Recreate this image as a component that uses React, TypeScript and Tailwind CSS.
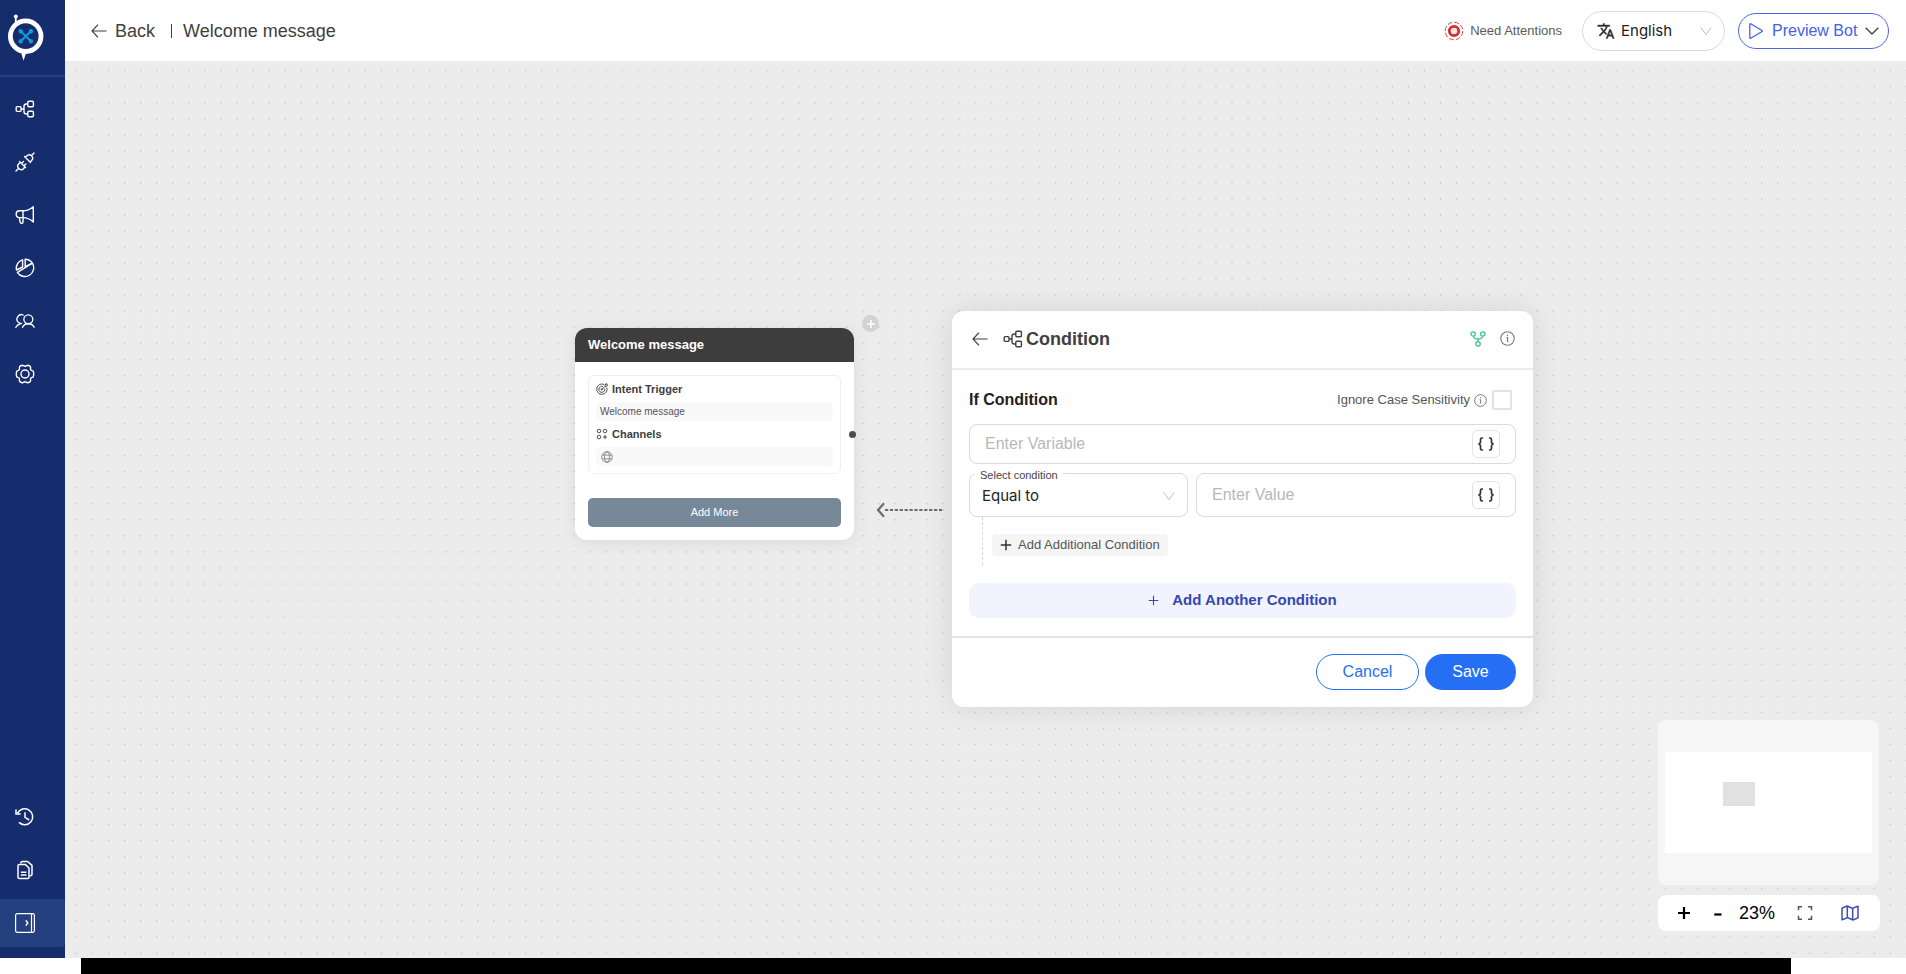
import React, { useState } from "react";

type IconProps = { className?: string };

const FlowIcon = ({ className = "size-5" }: IconProps) => (
  <svg viewBox="0 0 20 20" fill="none" stroke="currentColor" strokeWidth="1.4" className={className} aria-hidden="true">
    <rect x="1.2" y="7.6" width="4.8" height="4.8" rx="1" />
    <rect x="12.8" y="2.2" width="5.6" height="5.6" rx="1" />
    <rect x="12.8" y="12.2" width="5.6" height="5.6" rx="1" />
    <path d="M6 10h3M12.8 5h-1.6c-1.3 0-2.2.9-2.2 2.2v5.6c0 1.3.9 2.2 2.2 2.2h1.6" />
  </svg>
);

const PlugIcon = ({ className = "size-5" }: IconProps) => (
  <svg viewBox="0 0 20 20" fill="none" stroke="currentColor" strokeWidth="1.4" strokeLinecap="round" strokeLinejoin="round" className={className} aria-hidden="true">
    <path d="M1 19l2.200-2.200M4.500 9.500l6 6M5.300 10.300l-1.300 1.300c-1.500 1.500-1.500 3.700-.2 5 1.300 1.300 3.500 1.300 5-.2l1-1.600M6.800 11.200l1.700-1.700M9.200 13.600l1.700-1.700" />
    <path d="M19 1l-2.200 2.200M9.500 4.500l6 6M10.300 5.300l1.300-1.300c1.500-1.500 3.700-1.500 5-.2 1.300 1.300 1.300 3.500-.2 5l-1.600 1" />
  </svg>
);

const MegaphoneIcon = ({ className = "size-5" }: IconProps) => (
  <svg viewBox="0 0 20 20" fill="none" stroke="currentColor" strokeWidth="1.4" strokeLinejoin="round" className={className} aria-hidden="true">
    <path d="M8 5.800H4.600a3.200 3.200 0 0 0 0 6.800H8c4 0 7.600 1.900 10.300 4.400V1.700C15.600 4 12 5.800 8 5.800z" />
    <path d="M8 5.800v11.200c0 1.900-2.600 1.900-2.900 0l-.8-4.400" />
  </svg>
);

const PieIcon = ({ className = "size-5" }: IconProps) => (
  <svg viewBox="0 0 20 20" fill="none" stroke="currentColor" strokeWidth="1.4" strokeLinejoin="round" className={className} aria-hidden="true">
    <path d="M10.200 1.300a8.700 8.700 0 0 1 7.200 3.900L10.200 8.700z" />
    <path d="M7.600 1.800v7.200l-6.100 3A8.700 8.700 0 0 1 7.600 1.800z" />
    <path d="M2.400 14.300L17.400 5.200a8.700 8.700 0 1 1-15 9.100z" />
  </svg>
);

const UsersIcon = ({ className = "size-5" }: IconProps) => (
  <svg viewBox="0 0 21 20" fill="none" stroke="currentColor" strokeWidth="1.4" strokeLinecap="round" className={className} aria-hidden="true">
    <circle cx="14" cy="8.200" r="4.700" />
    <path d="M7.900 16.600c1.100-2.400 3.300-3.700 6.100-3.700s5 1.300 6.100 3.700" />
    <path d="M8.600 3.700a4.700 4.700 0 0 0-5.300 7.500c.9.900 2.200 1.500 3.500 1.400M.9 16.600c.9-1.900 2.600-3.200 4.700-3.700" />
  </svg>
);

const GearIcon = ({ className = "size-5" }: IconProps) => (
  <svg viewBox="0 0 20 20" fill="none" stroke="currentColor" strokeWidth="1.4" strokeLinejoin="round" className={className} aria-hidden="true">
    <circle cx="10" cy="10" r="4" />
    <path d="M7.200 1.200c.9 0 1.700 1.100 2.800 1.100s1.900-1.100 2.800-1.100c1 .2 2.400 1 2.700 1.700.3.900-.3 2 .3 2.900.6.900 1.900.8 2.500 1.500.5.700.5 4.700 0 5.400-.6.700-1.900.6-2.500 1.500-.6.900 0 2-.3 2.900-.3.700-1.700 1.500-2.700 1.700-.9 0-1.700-1.100-2.800-1.100s-1.900 1.100-2.800 1.100c-1-.2-2.400-1-2.700-1.700-.3-.9.300-2-.3-2.900-.6-.9-1.900-.8-2.500-1.500-.5-.7-.5-4.700 0-5.400.6-.7 1.900-.6 2.500-1.500.6-.9 0-2 .3-2.900.3-.7 1.700-1.500 2.700-1.700z" />
  </svg>
);

const HistoryIcon = ({ className = "size-5" }: IconProps) => (
  <svg viewBox="0 0 20 20" fill="none" stroke="currentColor" strokeWidth="1.500" className={className} aria-hidden="true">
    <path d="M2.500 6.300A8 8 0 1 1 4 15.400" />
    <path d="M1 2.500v4.400h4.600" />
    <path d="M10 5.200v5.200l4.200 2.600" />
  </svg>
);

const DocsIcon = ({ className = "size-5" }: IconProps) => (
  <svg viewBox="0 0 20 20" fill="none" stroke="currentColor" strokeWidth="1.500" strokeLinejoin="round" className={className} aria-hidden="true">
    <path d="M3 5.800c0-.8.6-1.400 1.400-1.400h5.800L14 8v9.200c0 .8-.6 1.400-1.400 1.400H4.400c-.8 0-1.400-.6-1.400-1.400z" />
    <path d="M5.900 3.600V3c0-.9.6-1.500 1.500-1.500h5.200L17 5.400v8.800c0 .9-.6 1.500-1.500 1.500H14.900" />
    <path d="M5.800 12.300h5.600M5.800 15h5.600" />
  </svg>
);

const PanelIcon = ({ className = "size-5" }: IconProps) => (
  <svg viewBox="0 0 20 20" fill="none" stroke="currentColor" strokeWidth="1.200" strokeLinejoin="round" className={className} aria-hidden="true">
    <rect x=".6" y=".6" width="18.800" height="18.800" rx="1.800" />
    <path d="M16.500.6v18.800" />
    <path d="M10.800 7.400l2 2.600-2 2.600" strokeWidth="1.500" />
  </svg>
);

const Logo = () => (
  <svg viewBox="0 0 40 50" className="h-[50px] w-10" aria-label="Bot logo" role="img">
    <path d="M9.800 5v7" stroke="#fff" strokeWidth="1.800" />
    <circle cx="9.800" cy="4.600" r="2" fill="#fff" />
    <circle cx="19.700" cy="24.200" r="15.300" fill="none" stroke="#fff" strokeWidth="4.800" />
    <path d="M14.800 39.500h5.800l-3.100 9.300z" fill="#fff" />
    <g stroke="#0d9ddb" strokeWidth="2" fill="#0d9ddb">
      <path d="M14.800 19.300l10 10M24.800 19.300l-10 10" />
      <circle cx="14.700" cy="19.200" r="1.200" />
      <circle cx="24.900" cy="19.200" r="1.200" />
      <circle cx="14.700" cy="29.300" r="1.200" />
      <circle cx="24.900" cy="29.300" r="1.200" />
    </g>
  </svg>
);

const BackArrow = ({ className = "h-4 w-4" }: IconProps) => (
  <svg viewBox="0 0 16 16" fill="none" stroke="currentColor" strokeWidth="1.200" className={className} aria-hidden="true">
    <path d="M15.600 8H1M7 1.600L1 8l6 6.400" />
  </svg>
);

const ChevronDown = ({ className = "h-3 w-3" }: IconProps) => (
  <svg viewBox="0 0 12 10" fill="none" stroke="currentColor" className={className} aria-hidden="true">
    <path d="M.8 1.500L6 8.500l5.200-7" />
  </svg>
);

const AlertIcon = () => (
  <svg viewBox="0 0 20 20" fill="none" className="size-5" aria-hidden="true">
    <circle cx="10" cy="10" r="8.800" stroke="#e04848" strokeWidth="1" strokeDasharray="4.900 2" />
    <circle cx="10" cy="10" r="4.700" fill="#fbe6e6" stroke="#d32f2f" strokeWidth="2.800" />
  </svg>
);

const TranslateIcon = () => (
  <svg viewBox="0 0 24 24" fill="currentColor" stroke="currentColor" strokeWidth=".5" className="size-[18px]" aria-hidden="true">
    <path d="M12.870 15.070l-2.540-2.510.03-.03A17.520 17.520 0 0 0 14.070 6H17V4h-7V2H8v2H1v1.990h11.170C11.500 7.920 10.440 9.750 9 11.350 8.070 10.320 7.300 9.190 6.690 8h-2c.73 1.630 1.730 3.170 2.980 4.560l-5.090 5.020L4 19l5-5 3.110 3.110.76-2.040zM18.500 10h-2L12 22h2l1.120-3h4.750L21 22h2l-4.500-12zm-2.620 7l1.620-4.330L19.120 17h-3.240z" />
  </svg>
);

const InfoIcon = ({ className = "size-4" }: IconProps) => (
  <svg viewBox="0 0 16 16" fill="none" stroke="currentColor" strokeWidth="1.200" className={className} aria-hidden="true">
    <circle cx="8" cy="8" r="7.200" />
    <path d="M6.900 6.900H8.100v4.900" />
    <circle cx="8" cy="4.500" r=".8" fill="currentColor" stroke="none" />
  </svg>
);

const BranchIcon = () => (
  <svg viewBox="0 0 16 16" fill="none" stroke="currentColor" strokeWidth="1.200" className="size-4" aria-hidden="true">
    <circle cx="3.200" cy="3" r="2.200" />
    <circle cx="12.800" cy="3" r="2.200" />
    <circle cx="8" cy="12.900" r="2.200" />
    <path d="M3.600 5.300c.2 1.600 1.100 2.500 2.600 2.500h3.600c1.500 0 2.400-.9 2.600-2.500M8 7.800v2.900" />
  </svg>
);

const TargetIcon = () => (
  <svg viewBox="0 0 12 12" fill="none" stroke="currentColor" strokeWidth=".9" className="size-3" aria-hidden="true">
    <path d="M10.800 4.400A5.200 5.200 0 1 1 8.200 1.500" />
    <path d="M8.700 5.400A3 3 0 1 1 6.800 3.500" />
    <path d="M6 6.300l3-3V1.800L10.600.5v1.400h1.200L10.400 3.400H9" />
    <circle cx="5.900" cy="6.300" r=".8" />
  </svg>
);

const ChannelsIcon = () => (
  <svg viewBox="0 0 12 12" fill="none" stroke="currentColor" strokeWidth=".9" className="size-3" aria-hidden="true">
    <circle cx="3" cy="3" r="1.800" />
    <circle cx="9" cy="3" r="1.800" />
    <circle cx="3" cy="9" r="1.800" />
    <path d="M9 7v4M7 9h4" />
  </svg>
);

const GlobeIcon = () => (
  <svg viewBox="0 0 12 12" fill="none" stroke="currentColor" strokeWidth=".8" className="size-3" aria-hidden="true">
    <circle cx="6" cy="6" r="5.300" />
    <ellipse cx="6" cy="6" rx="2.500" ry="5.300" />
    <path d="M1.300 4.100h9.400M1.300 7.900h9.400" />
  </svg>
);

const PlusIcon = ({ className = "size-3" }: IconProps) => (
  <svg viewBox="0 0 12 12" fill="none" stroke="currentColor" strokeWidth="1.200" className={className} aria-hidden="true">
    <path d="M6 .8v10.400M.8 6h10.400" />
  </svg>
);

const PlayIcon = () => (
  <svg viewBox="0 0 16 18" fill="none" stroke="currentColor" strokeWidth="1.300" strokeLinejoin="round" className="h-[18px] w-4" aria-hidden="true">
    <path d="M1.800 2.300v13.400c0 .5.400.8.900.5l11.400-6.700c.4-.2.400-.8 0-1L2.700 1.800c-.5-.3-.9 0-.9.500z" />
  </svg>
);

const ExpandIcon = () => (
  <svg viewBox="0 0 16 16" fill="none" stroke="currentColor" strokeWidth="1.500" className="size-4" aria-hidden="true">
    <path d="M1.500 5.200V1.700H5M11 1.700h3.500v3.500M14.500 10.800v3.500H11M5 14.300H1.500v-3.500" />
  </svg>
);

const MapIcon = () => (
  <svg viewBox="0 0 18 16" fill="none" stroke="currentColor" strokeWidth="1.500" strokeLinejoin="round" className="h-4 w-[18px]" aria-hidden="true">
    <path d="M1 3.200l4.600-2.100 1.700.4 3.800 1.900 5.900-2.100v11.500l-4.600 2.100-1.700-.4-3.800-1.900L1 14.700zM6.300 1.100v11.500M11.700 3.400v11.500" />
  </svg>
);

const mainNav = [
  { label: "Flows", icon: FlowIcon },
  { label: "Integrations", icon: PlugIcon },
  { label: "Campaigns", icon: MegaphoneIcon },
  { label: "Analytics", icon: PieIcon },
  { label: "Users", icon: UsersIcon },
  { label: "Settings", icon: GearIcon },
];

const Sidebar = () => (
  <aside className="flex w-[65px] shrink-0 flex-col bg-[#162d6d] text-white">
    <div className="border-b-2 border-[#24407f] pt-3 pb-[13px] pl-[6px]">
      <Logo />
    </div>
    <nav className="flex flex-col gap-[5px] pt-2" aria-label="Main">
      {mainNav.map(({ label, icon: Icon }) => (
        <button key={label} type="button" aria-label={label} className="flex h-12 items-center pl-[15px]">
          <Icon />
        </button>
      ))}
    </nav>
    <nav className="mt-auto flex flex-col gap-[5px] pb-[11px]" aria-label="Secondary">
      <button type="button" aria-label="History" className="flex h-12 items-center pl-[15px]">
        <HistoryIcon />
      </button>
      <button type="button" aria-label="Documents" className="flex h-12 items-center pl-[15px]">
        <DocsIcon />
      </button>
      <button type="button" aria-label="Expand sidebar" className="flex h-12 items-center rounded-r-sm bg-[#24407f] pl-[15px]">
        <PanelIcon />
      </button>
    </nav>
  </aside>
);

const Header = () => (
  <header className="flex h-[61px] shrink-0 items-center bg-white pr-[17px] pl-[26px] text-[#404040]">
    <button type="button" className="flex items-center gap-2 text-lg">
      <BackArrow />
      Back
    </button>
    <span className="ml-4 h-[14px] w-px bg-[#404040]" aria-hidden="true" />
    <h1 className="ml-[11px] text-lg">Welcome message</h1>
    <div className="ml-auto flex items-center">
      <div className="flex items-center gap-[6px] text-[13px] text-[#5a5a5a]">
        <AlertIcon />
        Need Attentions
      </div>
      <div className="relative ml-5 flex h-10 w-[143px] items-center rounded-full border border-[#d9d9d9]">
        <span className="pointer-events-none absolute left-[14px] text-[#303030]">
          <TranslateIcon />
        </span>
        <select aria-label="Language" className="h-full w-full appearance-none rounded-full bg-transparent pt-[2px] pl-[38px] font-[Inter,sans-serif] text-[15px] text-[#222]">
          <option>English</option>
        </select>
        <ChevronDown className="pointer-events-none absolute right-3 h-[10px] w-3 text-[#bfbfbf]" />
      </div>
      <button type="button" className="ml-[13px] flex h-9 w-[151px] items-center rounded-full border border-[#4b69e6] pl-[9px] text-base text-[#4361ee]">
        <PlayIcon />
        <span className="ml-2">Preview Bot</span>
        <svg viewBox="0 0 14 8" fill="none" stroke="#444" strokeWidth="1.400" className="ml-2 h-2 w-[14px]" aria-hidden="true">
          <path d="M.7.8L7 7l6.300-6.200" />
        </svg>
      </button>
    </div>
  </header>
);

const DotGrid = () => (
  <svg className="absolute inset-0 h-full w-full" aria-hidden="true">
    <defs>
      <pattern id="dots" x="10.800" y="8.800" width="16.050" height="16.050" patternUnits="userSpaceOnUse">
        <circle cx=".7" cy=".7" r=".65" fill="#b0b0b0" />
      </pattern>
    </defs>
    <rect width="100%" height="100%" fill="url(#dots)" />
  </svg>
);

const MessageNode = () => (
  <section className="absolute top-[267px] left-[510px] w-[279px] rounded-xl bg-white shadow-[0_2px_16px_rgba(0,0,0,0.08)]">
    <h2 className="flex h-[34px] items-center rounded-t-xl bg-[#3d3d3d] pl-[13px] text-[13px] font-bold text-white">Welcome message</h2>
    <div className="p-[13px]">
      <div className="rounded-md border border-[#efefef] px-[7px] pt-[2px] pb-[7px]">
        <h3 className="flex h-[22px] items-center gap-1 text-[11px] font-bold text-[#3d3d3d]">
          <TargetIcon />
          Intent Trigger
        </h3>
        <p className="mt-[2px] flex h-[19px] items-center rounded-sm bg-[#f9f9f9] pl-1 text-[10px] text-[#555]">Welcome message</p>
        <h3 className="mt-[2px] flex h-[22px] items-center gap-1 text-[11px] font-bold text-[#3d3d3d]">
          <ChannelsIcon />
          Channels
        </h3>
        <div className="mt-[2px] flex h-[19px] items-center rounded-sm bg-[#f9f9f9] pl-[5px] text-[#777]">
          <GlobeIcon />
        </div>
      </div>
      <button type="button" className="mt-6 h-[29px] w-full rounded-[5px] bg-[#778899] text-[11px] text-white">Add More</button>
    </div>
    <span className="absolute top-[103px] right-[-2px] size-[7px] rounded-full bg-[#4d4d4d]" />
    <button type="button" aria-label="Add node" className="absolute top-[-13px] right-[-25px] flex size-[17px] items-center justify-center rounded-full bg-[#d3d3d3] text-white">
      <svg viewBox="0 0 10 10" stroke="currentColor" strokeWidth="1.500" className="size-[10px]" aria-hidden="true">
        <path d="M5 1v8M1 5h8" />
      </svg>
    </button>
  </section>
);

const BracesButton = ({ label }: { label: string }) => (
  <button type="button" aria-label={label} className="flex size-7 shrink-0 items-center justify-center rounded-[5px] border border-[#e3e3e3] text-[#333]">
    <svg viewBox="0 0 18 14" fill="none" stroke="currentColor" strokeWidth="1.700" className="h-[14px] w-[18px]" aria-hidden="true">
      <path d="M6 1H5C4 1 3.500 1.500 3.500 2.500v2.300C3.500 6 2.700 7 1.300 7c1.400 0 2.200 1 2.200 2.200v2.300c0 1 .5 1.500 1.500 1.500h1M12 1h1c1 0 1.500.5 1.500 1.500v2.300c0 1.200.8 2.200 2.200 2.200-1.400 0-2.200 1-2.200 2.200v2.300c0 1-.5 1.500-1.500 1.500h-1" />
    </svg>
  </button>
);

const ConditionPanel = () => {
  const [ignoreCase, setIgnoreCase] = useState(false);
  return (
    <section className="absolute top-[250px] left-[887px] w-[581px] rounded-xl bg-white shadow-[0_0_30px_rgba(0,0,0,0.1)]">
      <header className="flex h-[59px] items-center border-b-2 border-[#ececec] pr-[18px] pb-[2px] pl-5 text-[#404040]">
        <button type="button" aria-label="Back">
          <BackArrow className="size-4" />
        </button>
        <FlowIcon className="ml-[15px] size-5" />
        <h2 className="ml-[3px] text-lg font-bold">Condition</h2>
        <button type="button" aria-label="Branches" className="ml-auto text-[#2fc47c]">
          <BranchIcon />
        </button>
        <button type="button" aria-label="Condition help" className="ml-[14px] text-[#777]">
          <InfoIcon className="size-[15px]" />
        </button>
      </header>

      <div className="px-[17px] pt-5 pb-[18px]">
        <div className="flex h-5 items-center pr-1">
          <h3 className="text-base font-bold text-[#222]">If Condition</h3>
          <label htmlFor="ignore-case" className="ml-auto text-[13px] text-[#555]">Ignore Case Sensitivity</label>
          <InfoIcon className="ml-1 size-[13px] text-[#777]" />
          <input
            id="ignore-case"
            type="checkbox"
            checked={ignoreCase}
            onChange={(e) => setIgnoreCase(e.target.checked)}
            className="ml-[5px] size-5 appearance-none rounded-xs border-2 border-[#e2e2e2] checked:bg-[#256ff5]"
          />
        </div>

        <div className="mt-[14px] flex h-10 items-center rounded-lg border border-[#d9d9d9] px-[15px]">
          <input aria-label="Variable" placeholder="Enter Variable" className="min-w-0 flex-1 text-base outline-none placeholder:text-[#b8b8b8]" />
          <BracesButton label="Insert variable" />
        </div>

        <div className="mt-[9px] flex gap-2">
          <div className="relative h-11 w-[219px] rounded-lg border border-[#d9d9d9]">
            <label htmlFor="operator" className="absolute -top-[6px] left-[5px] bg-white px-[5px] text-[11px] leading-[14px] text-[#444]">Select condition</label>
            <select id="operator" className="h-full w-full appearance-none rounded-lg bg-transparent pt-[2px] pl-3 font-[Inter,sans-serif] text-[15px] text-[#222]">
              <option>Equal to</option>
            </select>
            <ChevronDown className="pointer-events-none absolute top-[17px] right-3 h-[10px] w-3 text-[#bfbfbf]" />
          </div>
          <div className="flex h-11 flex-1 items-center rounded-lg border border-[#d9d9d9] px-[15px]">
            <input aria-label="Value" placeholder="Enter Value" className="min-w-0 flex-1 text-base outline-none placeholder:text-[#b8b8b8]" />
            <BracesButton label="Insert value" />
          </div>
        </div>

        <div className="ml-[13px] flex h-12 items-center border-l border-dashed border-[#d9d9d9] pl-[9px]">
          <button type="button" className="mt-2 flex h-[22px] items-center gap-[6px] rounded-sm bg-[#f5f5f5] px-2 text-[13px] text-[#555]">
            <svg viewBox="0 0 12 12" stroke="#333" strokeWidth="1.500" className="size-3" aria-hidden="true">
              <path d="M6 .8v10.400M.8 6h10.400" />
            </svg>
            Add Additional Condition
          </button>
        </div>

        <button type="button" className="mt-[18px] flex h-[35px] w-full items-center justify-center gap-[13px] rounded-[10px] bg-[#f1f4ff] text-[15px] font-bold text-[#3547b0]">
          <PlusIcon className="size-[11px]" />
          Add Another Condition
        </button>
      </div>

      <footer className="flex justify-end gap-[6px] border-t-2 border-[#e4e4e4] px-[17px] pt-4 pb-[17px] text-base">
        <button type="button" className="h-9 w-[103px] rounded-full border border-[#256ff5] text-[#256ff5]">Cancel</button>
        <button type="button" className="h-9 w-[91px] rounded-full bg-[#256ff5] text-white">Save</button>
      </footer>
    </section>
  );
};

const CanvasControls = () => (
  <div className="absolute right-[26px] bottom-[27px] flex w-[222px] flex-col gap-[10px]">
    <div className="mr-px flex h-[165px] items-center rounded-lg bg-[#f6f6f6] px-[7px]">
      <div className="h-[101px] w-full bg-white pt-[30px] pl-[58px]">
        <div className="h-6 w-8 bg-[#e1e1e1]" />
      </div>
    </div>
    <div className="flex h-9 items-center rounded-lg bg-white text-black">
      <button type="button" aria-label="Zoom in" className="ml-5">
        <svg viewBox="0 0 12 12" stroke="currentColor" strokeWidth="2.200" className="size-3" aria-hidden="true">
          <path d="M6 0v12M0 6h12" />
        </svg>
      </button>
      <button type="button" aria-label="Zoom out" className="ml-6">
        <svg viewBox="0 0 8 12" stroke="currentColor" strokeWidth="2.200" className="h-3 w-2" aria-hidden="true">
          <path d="M.3 7.500h7.200" />
        </svg>
      </button>
      <span className="ml-[17px] text-lg">23%</span>
      <button type="button" aria-label="Fit to screen" className="ml-[22px] text-[#555]">
        <ExpandIcon />
      </button>
      <button type="button" aria-label="Toggle map" className="mr-[21px] ml-auto text-[#3b4db5]">
        <MapIcon />
      </button>
    </div>
  </div>
);

export default function App() {
  return (
    <div className="flex h-screen flex-col bg-white font-['Liberation_Sans',Arial,sans-serif]">
      <div className="flex min-h-0 flex-1">
        <Sidebar />
        <div className="flex min-w-0 flex-1 flex-col">
          <Header />
          <main className="relative flex-1 overflow-hidden bg-[#ececec]">
            <DotGrid />
            <MessageNode />
            <svg viewBox="0 0 68 16" fill="none" stroke="#6b6b6b" strokeWidth="2" className="absolute top-[441px] left-[811px] h-4 w-[68px]" aria-hidden="true">
              <path d="M8 1.200L2 8l6 6.800" strokeWidth="2.200" />
              <path d="M9 8h59" strokeDasharray="3.200 1.700" />
            </svg>
            <ConditionPanel />
            <CanvasControls />
          </main>
        </div>
      </div>
      <div className="mr-[115px] ml-[81px] h-4 shrink-0 bg-black" />
    </div>
  );
}
